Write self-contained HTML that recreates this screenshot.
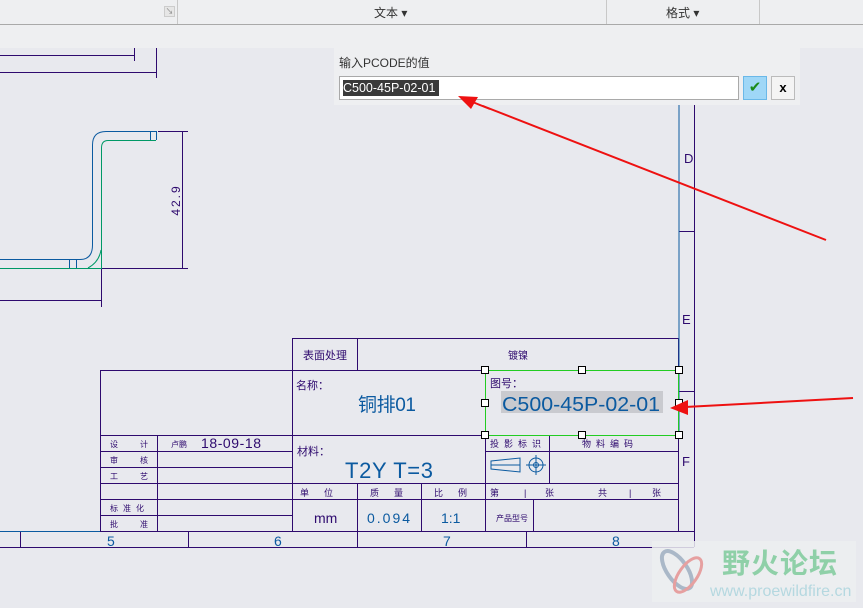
<!DOCTYPE html>
<html><head><meta charset="utf-8"><style>
html,body{margin:0;padding:0;width:863px;height:608px;overflow:hidden;background:#e8e9ee;font-family:"Liberation Sans","Noto Sans CJK SC",sans-serif}
.tb{position:absolute;left:0;top:0;width:863px;height:24px;background:#eeeff1;border-bottom:1px solid #a9a9a9}
.sub{position:absolute;left:0;top:25px;width:863px;height:23px;background:#eeeff1}
.sep{position:absolute;top:0;width:1px;height:24px;background:#c8c8c8}
.lbl{position:absolute;top:4px;font-size:12px;color:#333}
.dlg{position:absolute;left:334px;top:48px;width:466px;height:57px;background:#eeeff1}
</style></head><body>
<div class="tb">
<div class="sep" style="left:177px"></div>
<div class="sep" style="left:606px"></div>
<div class="sep" style="left:759px"></div>
<div style="position:absolute;left:164px;top:6px;width:9px;height:9px;border:1px solid #ccc;background:#e6e6e6;font-size:8px;color:#888;line-height:9px;text-align:center">↘</div>
<div class="lbl" style="left:374px">文本 ▾</div>
<div class="lbl" style="left:666px">格式 ▾</div>
</div>
<div class="sub"></div>
<svg style="position:absolute;left:0;top:0" width="863" height="608">
<g fill="none" stroke="#2e0a6e" stroke-width="1">
<line x1="0" y1="55.5" x2="134" y2="55.5"/><line x1="134.5" y1="48" x2="134.5" y2="61"/>
<line x1="0" y1="72.5" x2="156" y2="72.5"/><line x1="156.5" y1="48" x2="156.5" y2="78"/>
<line x1="158" y1="131.5" x2="188" y2="131.5"/><line x1="85" y1="268.5" x2="188" y2="268.5"/>
<line x1="182.5" y1="132" x2="182.5" y2="268"/>
<line x1="101.5" y1="252" x2="101.5" y2="307"/><line x1="0" y1="300.5" x2="101" y2="300.5"/>
<line x1="694.5" y1="105" x2="694.5" y2="547"/>
<line x1="679" y1="231.5" x2="694" y2="231.5"/><line x1="679" y1="391.5" x2="694" y2="391.5"/>
<rect x="292.5" y="338.5" width="386" height="193"/>
<line x1="357.5" y1="338" x2="357.5" y2="370"/>
<line x1="100" y1="370.5" x2="678" y2="370.5"/>
<line x1="100.5" y1="370" x2="100.5" y2="531"/>
<line x1="157.5" y1="435" x2="157.5" y2="531"/>
<line x1="100" y1="435.5" x2="485" y2="435.5"/>
<line x1="100" y1="451.5" x2="292" y2="451.5"/>
<line x1="100" y1="467.5" x2="292" y2="467.5"/>
<line x1="100" y1="483.5" x2="678" y2="483.5"/>
<line x1="100" y1="499.5" x2="678" y2="499.5"/>
<line x1="100" y1="515.5" x2="292" y2="515.5"/>
<line x1="485.5" y1="370" x2="485.5" y2="531"/>
<line x1="485" y1="451.5" x2="678" y2="451.5"/>
<line x1="549.5" y1="435" x2="549.5" y2="484"/>
<line x1="357.5" y1="484" x2="357.5" y2="531"/>
<line x1="421.5" y1="484" x2="421.5" y2="531"/>
<line x1="533.5" y1="500" x2="533.5" y2="531"/>
<line x1="100" y1="531.5" x2="694" y2="531.5"/>
<line x1="0" y1="547.5" x2="694" y2="547.5"/>
<line x1="20.5" y1="531" x2="20.5" y2="547"/><line x1="188.5" y1="531" x2="188.5" y2="547"/>
<line x1="357.5" y1="531" x2="357.5" y2="547"/><line x1="526.5" y1="531" x2="526.5" y2="547"/>
</g>
<line x1="679" y1="105" x2="679" y2="435" stroke="#0b5aa0"/>
<line x1="0" y1="531.5" x2="100" y2="531.5" stroke="#0b5aa0"/>
<path d="M156 131.5 H106 Q92.5 131.5 92.5 145 V245 Q92.5 259.5 80 259.5 H0" fill="none" stroke="#0b5aa0"/>
<path d="M156 140.5 H108 Q101.5 140.5 101.5 148 V268.5 H0" fill="none" stroke="#009966"/>
<path d="M101 250 Q99 262 88 268" fill="none" stroke="#009966"/>
<line x1="150.5" y1="131" x2="150.5" y2="140" stroke="#0b5aa0"/><line x1="156.5" y1="131" x2="156.5" y2="140" stroke="#0b5aa0"/>
<line x1="69.5" y1="259" x2="69.5" y2="268" stroke="#0b5aa0"/><line x1="76.5" y1="259" x2="76.5" y2="268" stroke="#0b5aa0"/>
<text transform="translate(180,200) rotate(-90)" text-anchor="middle" font-size="12" fill="#2e0a6e" font-family="Liberation Sans" letter-spacing="2">42.9</text>
<path d="M491 461 L520 458 L520 472 L491 469 Z M491 465 H520" fill="none" stroke="#0b5aa0"/>
<circle cx="536" cy="465" r="7" fill="none" stroke="#0b5aa0"/><circle cx="536" cy="465" r="2.5" fill="none" stroke="#0b5aa0"/>
<line x1="526" y1="465" x2="546" y2="465" stroke="#0b5aa0"/><line x1="536" y1="455" x2="536" y2="475" stroke="#0b5aa0"/>
<g font-family="Liberation Sans,Noto Sans CJK SC,sans-serif" fill="#2e0a6e">
<text x="684" y="163" font-size="13">D</text><text x="682" y="324" font-size="13">E</text><text x="682" y="466" font-size="13">F</text>
<text x="303" y="359" font-size="11">表面处理</text><text x="508" y="359" font-size="10">镀镍</text>
<text x="296" y="389" font-size="11">名称：</text>
<text x="297" y="455" font-size="11">材料：</text>
<text x="490" y="387" font-size="11">图号：</text>
<text x="490" y="447" font-size="9" letter-spacing="5">投影标识</text>
<text x="582" y="447" font-size="9" letter-spacing="5">物料编码</text>
<text x="300" y="496" font-size="9" letter-spacing="15">单位</text>
<text x="370" y="496" font-size="9" letter-spacing="15">质量</text>
<text x="434" y="496" font-size="9" letter-spacing="15">比例</text>
<text x="490" y="496" font-size="9">第</text><text x="524" y="496" font-size="9">|</text><text x="545" y="496" font-size="9">张</text>
<text x="598" y="496" font-size="9">共</text><text x="629" y="496" font-size="9">|</text><text x="652" y="496" font-size="9">张</text>
<text x="496" y="521" font-size="8">产品型号</text>
<text x="110" y="447" font-size="8">设</text><text x="140" y="447" font-size="8">计</text><text x="171" y="447" font-size="8">卢鹏</text>
<text x="110" y="463" font-size="8">审</text><text x="140" y="463" font-size="8">核</text>
<text x="110" y="479" font-size="8">工</text><text x="140" y="479" font-size="8">艺</text>
<text x="110" y="511" font-size="8" letter-spacing="5">标准化</text>
<text x="110" y="527" font-size="8">批</text><text x="140" y="527" font-size="8">准</text>
</g>
<g font-family="Liberation Sans,Noto Sans CJK SC,sans-serif" fill="#0b5aa0">
<text x="201" y="448" font-size="14" fill="#2e0a6e" textLength="60" lengthAdjust="spacing">18-09-18</text>
<text x="358" y="411" font-size="19" textLength="58" lengthAdjust="spacing">铜排01</text>
<text x="345" y="478" font-size="22" textLength="88" lengthAdjust="spacing">T2Y T=3</text>
<text x="314" y="523" font-size="14" fill="#2e0a6e">mm</text>
<text x="367" y="523" font-size="14" letter-spacing="2">0.094</text>
<text x="441" y="523" font-size="14">1:1</text>
<text x="107" y="546" font-size="14">5</text><text x="274" y="546" font-size="14">6</text>
<text x="443" y="546" font-size="14">7</text><text x="612" y="546" font-size="14">8</text>
</g>
<rect x="501" y="391" width="162" height="22" fill="#c9cacf"/>
<text x="502" y="411" font-size="20" fill="#0b5aa0" font-family="Liberation Sans" textLength="158" lengthAdjust="spacingAndGlyphs">C500-45P-02-01</text>
<rect x="485.5" y="370.5" width="193" height="65" fill="none" stroke="#22cc22"/>
<g fill="#fff" stroke="#000">
<rect x="481.5" y="366.5" width="7" height="7"/><rect x="578.5" y="366.5" width="7" height="7"/><rect x="675.5" y="366.5" width="7" height="7"/>
<rect x="481.5" y="399.5" width="7" height="7"/><rect x="675.5" y="399.5" width="7" height="7"/>
<rect x="481.5" y="431.5" width="7" height="7"/><rect x="578.5" y="431.5" width="7" height="7"/><rect x="675.5" y="431.5" width="7" height="7"/>
</g>
<rect x="652" y="541" width="204" height="61" fill="#eceef0" opacity="0.85"/>
<ellipse cx="677" cy="570" rx="10" ry="22" transform="rotate(-35 677 570)" fill="none" stroke="#aab8c8" stroke-width="4"/>
<ellipse cx="688" cy="575" rx="9" ry="20" transform="rotate(35 688 575)" fill="none" stroke="#e6a0a0" stroke-width="3"/>
<text x="722" y="573" font-size="28" font-weight="bold" fill="#8fd0a8" font-family="Noto Sans CJK SC,sans-serif" letter-spacing="1">野火论坛</text>
<text x="710" y="596" font-size="16" fill="#b5d8e0" font-family="Liberation Sans">www.proewildfire.cn</text>
<g stroke="#ee1111" stroke-width="2" fill="#ee1111">
<line x1="826" y1="240" x2="470" y2="101"/>
<line x1="853" y1="398" x2="685" y2="407"/>
</g>
<polygon points="670,408 688,400 688,415" fill="#ee1111"/>
</svg>
<div class="dlg">
<div style="position:absolute;left:5px;top:6px;font-size:12px;color:#333">输入PCODE的值</div>
<div style="position:absolute;left:5px;top:28px;width:398px;height:22px;background:#fff;border:1px solid #a9a9a9"></div>
<div style="position:absolute;left:9px;top:32px;height:16px;width:96px;background:#3a3a3a;color:#fff;font-size:12.5px;line-height:16px">C500-45P-02-01</div>
<div style="position:absolute;left:409px;top:28px;width:22px;height:22px;background:#9fd7f7;border:1px solid #6ab8e8;color:#1a8a1a;text-align:center;font-size:15px;line-height:22px">✔</div>
<div style="position:absolute;left:437px;top:28px;width:22px;height:22px;background:#f4f4f4;border:1px solid #bbb;text-align:center;font-size:13px;font-weight:bold;line-height:21px">x</div>
</div>
<svg style="position:absolute;left:0;top:0" width="863" height="608">
<line x1="490" y1="109" x2="470" y2="101" stroke="#ee1111" stroke-width="2"/>
<polygon points="458,96 478,97 471,109" fill="#ee1111"/>
</svg>
</body></html>
